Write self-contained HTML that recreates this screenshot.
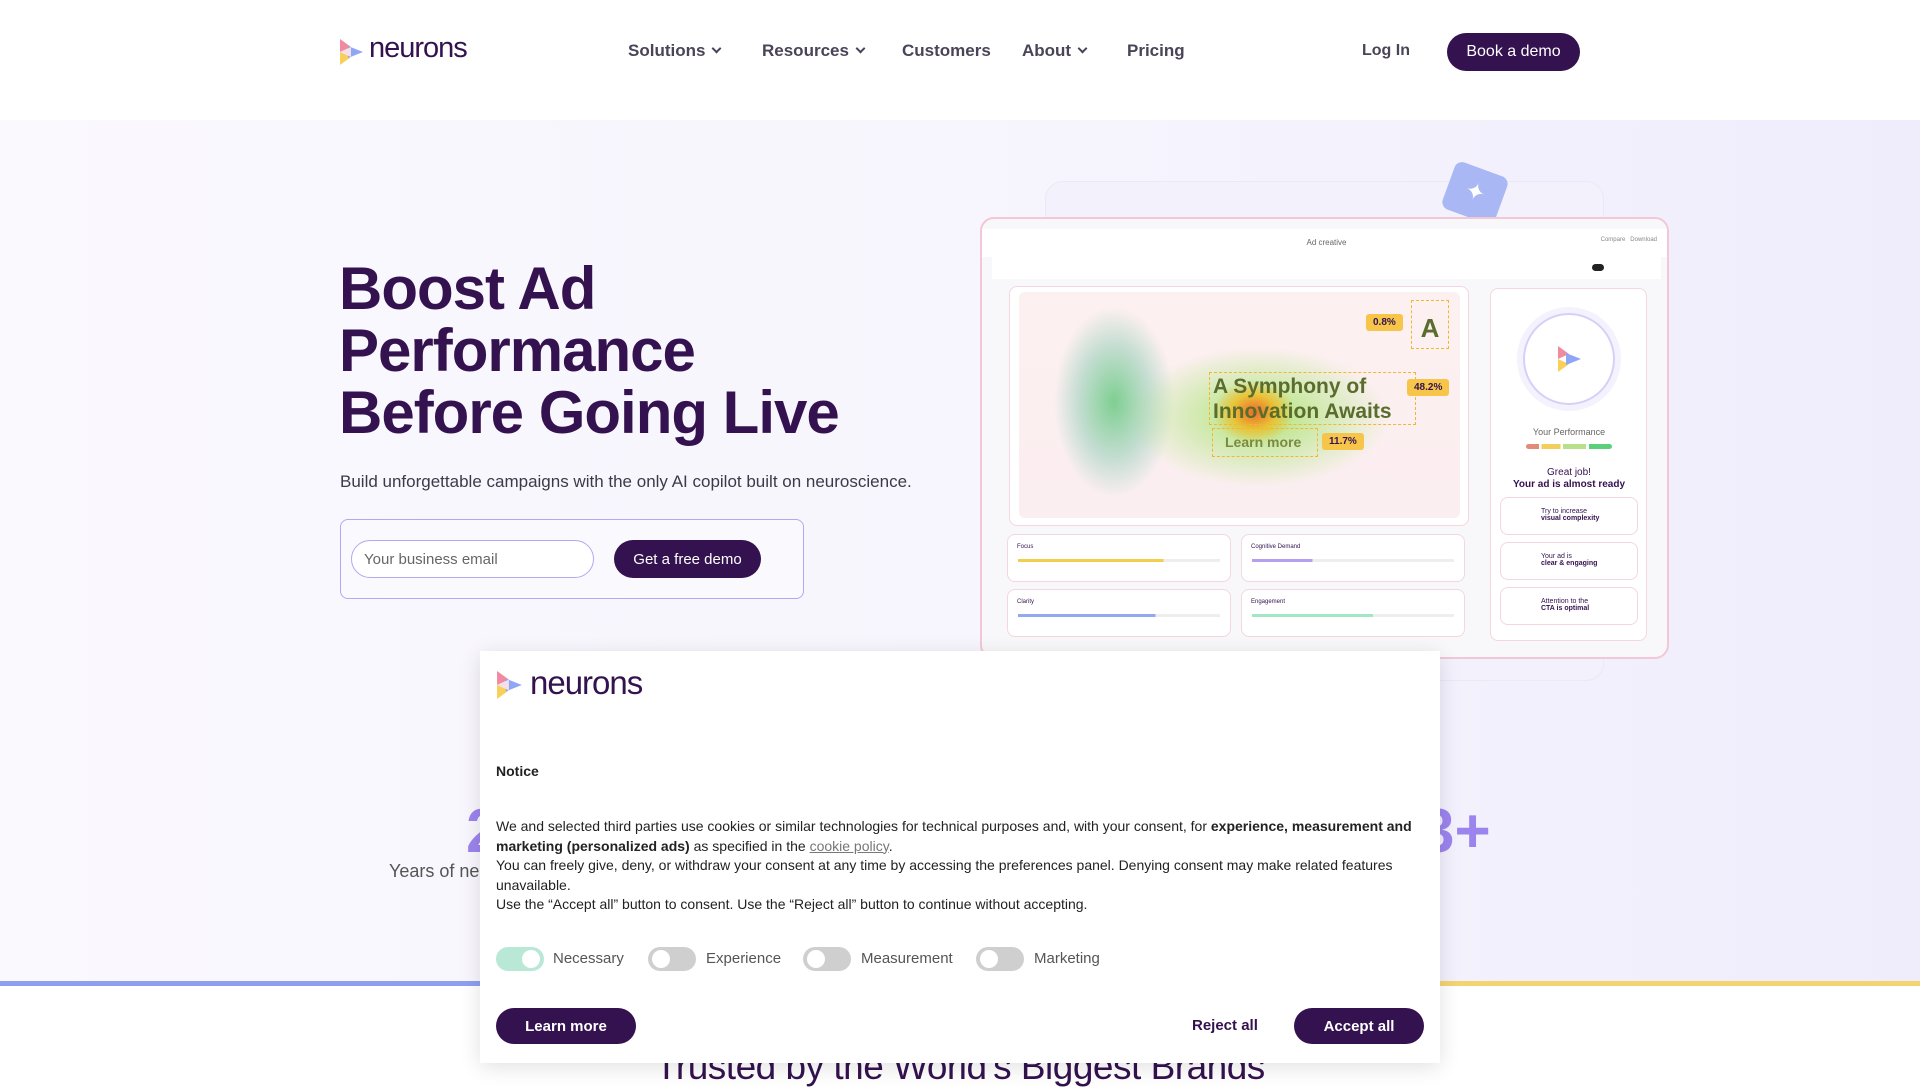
<!DOCTYPE html>
<html><head><meta charset="utf-8"><style>
*{box-sizing:border-box;margin:0;padding:0}
body{width:1920px;height:1080px;overflow:hidden;font-family:"Liberation Sans",sans-serif;background:#fff;position:relative;color:#34124f}
.abs{position:absolute}
.nav a{position:absolute;top:41px;font-size:17px;font-weight:bold;color:#4a4458;text-decoration:none}
.chev{display:inline-block;width:7px;height:7px;border-right:2px solid #4a4458;border-bottom:2px solid #4a4458;transform:rotate(45deg);margin-left:8px;position:relative;top:-4px}
.hero{position:absolute;left:0;top:120px;width:1920px;height:863px;background:linear-gradient(90deg,#faf9fe 0%,#f7f5fd 50%,#efedfc 100%)}
h1{position:absolute;left:339px;top:258px;font-size:60px;line-height:62px;font-weight:bold;color:#34124f;letter-spacing:-1px}
.btn{position:absolute;background:#34124f;color:#fff;border-radius:22px;font-weight:bold;display:flex;align-items:center;justify-content:center}
.card{position:absolute;background:#fff;border:1px solid #f3d6e0;border-radius:8px}
.tog{position:absolute;top:947px;width:48px;height:24px;border-radius:12px;background:#cfcfcf}
.tog::after{content:"";position:absolute;left:4px;top:3px;width:18px;height:18px;border-radius:50%;background:#fff}
.tog.on{background:#b9e8d6}.tog.on::after{left:26px}
.tl{position:absolute;top:950px;font-size:15px;color:#555}
.mt{font-size:14px;color:#222;line-height:19.6px}
.tag{position:absolute;background:#f6c54a;font-size:10px;font-weight:bold;padding:3px 7px;border-radius:3px;color:#34124f}
</style></head><body>
<svg class="abs" style="left:339px;top:38px" width="26" height="28" viewBox="0 0 26 28"><path d="M1 1 L12 9 L1 14Z" fill="#f08aa0"/><path d="M1 14 L12 19 L1 27Z" fill="#f8cf5a"/><path d="M9 8 L24 14 L9 20Z" fill="#8fa5f5"/><path d="M1 14 L12 9 L12 19Z" fill="#f4e0e8"/></svg>
<div class="abs" style="left:369px;top:32px;font-size:29px;color:#34124f;letter-spacing:-1px">neurons</div>
<div class="nav">
<a style="left:628px">Solutions<span class="chev"></span></a>
<a style="left:762px">Resources<span class="chev"></span></a>
<a style="left:902px">Customers</a>
<a style="left:1022px">About<span class="chev"></span></a>
<a style="left:1127px">Pricing</a>
<a style="left:1362px;top:42px;font-size:16px">Log In</a>
</div>
<div class="btn" style="left:1447px;top:33px;width:133px;height:38px;font-size:16px;font-weight:normal;border-radius:19px">Book a demo</div>

<div class="hero"></div>
<h1>Boost Ad<br>Performance<br>Before Going Live</h1>
<div class="abs" style="left:340px;top:472px;font-size:17px;color:#3c3a48">Build unforgettable campaigns with the only AI copilot built on neuroscience.</div>
<div class="abs" style="left:340px;top:519px;width:464px;height:80px;border:1.5px solid #b7a6f3;border-radius:8px;background:#faf9fe"></div>
<div class="abs" style="left:351px;top:540px;width:243px;height:38px;border:1.5px solid #b7a6f3;border-radius:19px;background:#fff;font-size:15px;color:#666;padding:10px 12px">Your business email</div>
<div class="btn" style="left:614px;top:540px;width:147px;height:38px;font-size:15px;font-weight:normal;border-radius:19px">Get a free demo</div>

<div class="abs" style="left:1045px;top:181px;width:559px;height:500px;border:1px solid #ebe8f7;border-radius:18px;background:#f3f1fc"></div>
<div class="abs" style="left:1447px;top:168px;width:56px;height:50px;background:#a9b7f5;border-radius:8px;transform:rotate(20deg);color:#fff;font-size:24px;text-align:center;line-height:50px">✦</div>
<div class="abs" style="left:980px;top:217px;width:689px;height:442px;background:#f8f8fa;border:2px solid #f2c7d6;border-radius:14px;overflow:hidden">
 <div class="abs" style="left:0;top:10px;width:689px;height:28px;background:#fff;font-size:8px;color:#666;text-align:center;line-height:28px">Ad creative</div>
 <div class="abs" style="right:10px;top:18px;font-size:6px;color:#888">Compare &nbsp; Download</div>
 <div class="abs" style="left:10px;top:38px;width:669px;height:22px;background:#fff"></div>
 <div class="abs" style="left:610px;top:45px;width:12px;height:7px;border-radius:4px;background:#222"></div>
 <div class="card" style="left:27px;top:67px;width:460px;height:240px"></div>
 <div class="abs" style="left:37px;top:73px;width:441px;height:226px;border-radius:6px;background:radial-gradient(ellipse 45px 35px at 235px 120px,#f06a2a,rgba(240,190,40,.85) 50%,transparent 90%),radial-gradient(ellipse 130px 70px at 240px 125px,rgba(150,225,80,.75),rgba(170,230,120,.3) 70%,transparent),radial-gradient(ellipse 60px 95px at 95px 110px,rgba(120,205,140,.95),rgba(160,210,190,.6) 60%,transparent),linear-gradient(#fdf0f1,#fbeef0)"></div>
 <div class="abs" style="left:227px;top:153px;width:207px;height:53px;font-size:21px;font-weight:bold;color:#5a6d2c;line-height:25px;border:1.5px dashed #f0b830;padding:1px 3px;white-space:nowrap">A Symphony of<br>Innovation Awaits</div>
 <div class="abs" style="left:230px;top:209px;width:106px;height:29px;border:1.5px dashed #f0b830;font-size:14px;font-weight:bold;color:#7a8a40;padding:5px 12px;white-space:nowrap">Learn more</div>
 <div class="abs" style="left:429px;top:81px;width:38px;height:49px;border:1.5px dashed #f0b830;font-size:26px;font-weight:bold;color:#5a6d2c;text-align:center;padding-top:12px">A</div>
 <div class="tag" style="left:384px;top:95px">0.8%</div>
 <div class="tag" style="left:425px;top:160px">48.2%</div>
 <div class="tag" style="left:340px;top:214px">11.7%</div>
 <div class="card" style="left:25px;top:315px;width:224px;height:48px"><div style="font-size:6px;margin:9px">Focus</div><div style="margin:0 10px;height:3px;background:linear-gradient(90deg,#f3cd4c 72%,#eee 72%)"></div></div>
 <div class="card" style="left:259px;top:315px;width:224px;height:48px"><div style="font-size:6px;margin:9px">Cognitive Demand</div><div style="margin:0 10px;height:3px;background:linear-gradient(90deg,#b5a0f0 30%,#eee 30%)"></div></div>
 <div class="card" style="left:25px;top:370px;width:224px;height:48px"><div style="font-size:6px;margin:9px">Clarity</div><div style="margin:0 10px;height:3px;background:linear-gradient(90deg,#93a8f2 68%,#eee 68%)"></div></div>
 <div class="card" style="left:259px;top:370px;width:224px;height:48px"><div style="font-size:6px;margin:9px">Engagement</div><div style="margin:0 10px;height:3px;background:linear-gradient(90deg,#a3e6c6 60%,#eee 60%)"></div></div>
 <div class="card" style="left:508px;top:69px;width:157px;height:353px">
  <div class="abs" style="left:32px;top:24px;width:92px;height:92px;border-radius:50%;border:2px solid #d6cff8;box-shadow:0 0 0 6px #f4f2fd"></div>
  <svg class="abs" style="left:66px;top:56px" width="26" height="28" viewBox="0 0 26 28"><path d="M1 1 L12 9 L1 14Z" fill="#f08aa0"/><path d="M1 14 L12 19 L1 27Z" fill="#f8cf5a"/><path d="M9 8 L24 14 L9 20Z" fill="#8fa5f5"/></svg>
  <div class="abs" style="left:0;width:156px;top:138px;font-size:9px;color:#666;text-align:center">Your Performance</div>
  <div class="abs" style="left:35px;top:155px;width:86px;height:5px;border-radius:3px;background:linear-gradient(90deg,#e48a7a 15%,#fff 15% 18%,#f2cf5a 18% 40%,#fff 40% 43%,#b8e08a 43% 70%,#fff 70% 73%,#5ccf7a 73%)"></div>
  <div class="abs" style="left:0;width:156px;top:178px;font-size:10px;color:#34124f;text-align:center;line-height:12px">Great job!<br><b>Your ad is almost ready</b></div>
  <div class="card" style="left:9px;top:208px;width:138px;height:38px;font-size:7px;padding:10px 0 0 40px">Try to increase<br><b>visual complexity</b></div>
  <div class="card" style="left:9px;top:253px;width:138px;height:38px;font-size:7px;padding:10px 0 0 40px">Your ad is<br><b>clear &amp; engaging</b></div>
  <div class="card" style="left:9px;top:298px;width:138px;height:38px;font-size:7px;padding:10px 0 0 40px">Attention to the<br><b>CTA is optimal</b></div>
 </div>
</div>

<div class="abs" style="left:466px;top:796px;font-size:62px;font-weight:bold;color:#9c84ee">2</div>
<div class="abs" style="left:1420px;top:796px;font-size:62px;font-weight:bold;color:#9c84ee">3+</div>
<div class="abs" style="left:389px;top:861px;font-size:18px;color:#555">Years of neu</div>
<div class="abs" style="left:0;top:981px;width:960px;height:5px;background:#8f9ef0"></div>
<div class="abs" style="left:960px;top:981px;width:960px;height:5px;background:#f4d470"></div>
<div class="abs" style="left:0;top:986px;width:1920px;height:94px;background:#fff"></div>
<div class="abs" style="left:0;width:1920px;top:1046px;font-size:37px;text-align:center;color:#34124f;letter-spacing:-0.5px">Trusted by the World's Biggest Brands</div>

<div class="abs" style="left:480px;top:651px;width:960px;height:412px;background:#fff;box-shadow:0 4px 20px rgba(0,0,0,.12)">
 <svg class="abs" style="left:16px;top:18px" width="28" height="32" viewBox="0 0 26 28"><path d="M1 1 L12 9 L1 14Z" fill="#f08aa0"/><path d="M1 14 L12 19 L1 27Z" fill="#f8cf5a"/><path d="M9 8 L24 14 L9 20Z" fill="#8fa5f5"/><path d="M1 14 L12 9 L12 19Z" fill="#f4e0e8"/></svg>
 <div class="abs" style="left:50px;top:13px;font-size:33px;color:#34124f;letter-spacing:-1px">neurons</div>
 <div class="abs" style="left:16px;top:112px;font-size:14px;font-weight:bold;color:#222">Notice</div>
 <div class="abs mt" style="left:16px;top:166px;width:930px">We and selected third parties use cookies or similar technologies for technical purposes and, with your consent, for <b>experience, measurement and marketing (personalized ads)</b> as specified in the <u style="color:#777">cookie policy</u>.<br>You can freely give, deny, or withdraw your consent at any time by accessing the preferences panel. Denying consent may make related features unavailable.<br>Use the “Accept all” button to consent. Use the “Reject all” button to continue without accepting.</div>
</div>
<div class="tog on" style="left:496px"></div><div class="tl" style="left:553px">Necessary</div>
<div class="tog" style="left:648px"></div><div class="tl" style="left:706px">Experience</div>
<div class="tog" style="left:803px"></div><div class="tl" style="left:861px">Measurement</div>
<div class="tog" style="left:976px"></div><div class="tl" style="left:1034px">Marketing</div>
<div class="btn" style="left:496px;top:1008px;width:140px;height:36px;font-size:15px">Learn more</div>
<div class="abs" style="left:1192px;top:1017px;font-size:15px;font-weight:bold;color:#34124f">Reject all</div>
<div class="btn" style="left:1294px;top:1008px;width:130px;height:36px;font-size:15px">Accept all</div>
</body></html>
